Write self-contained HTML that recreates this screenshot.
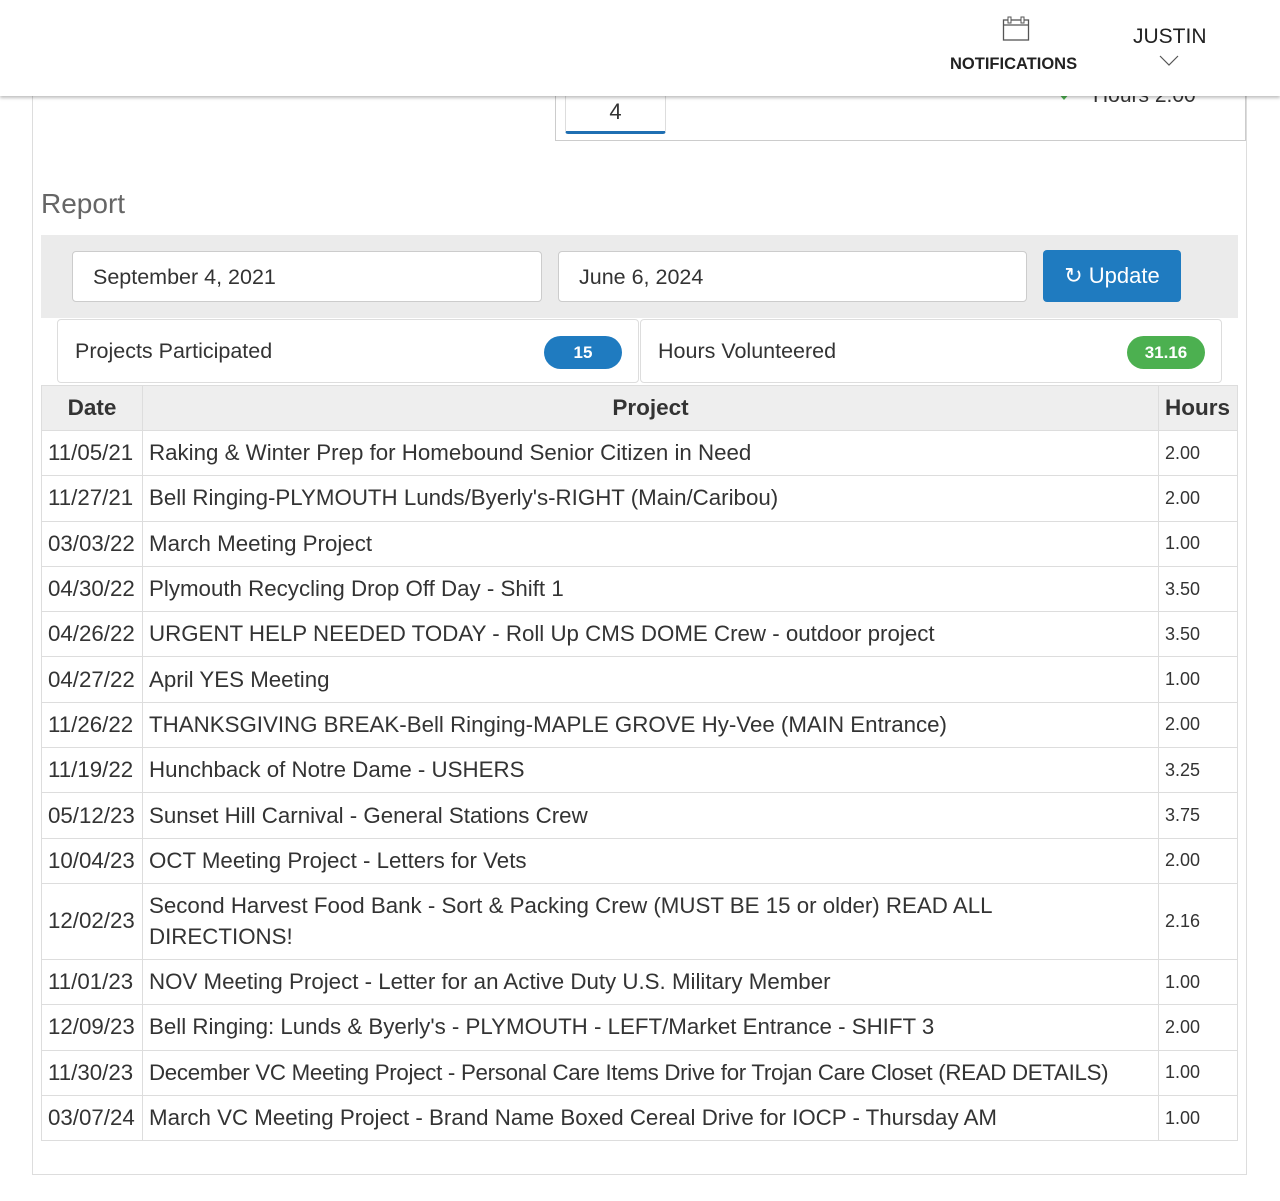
<!DOCTYPE html>
<html><head><style>
body{margin:0;width:1280px;height:1201px;background:#fff;font-family:"Liberation Sans",sans-serif;color:#333;position:relative;overflow:hidden}
.hdr{position:absolute;left:0;top:0;width:1280px;height:96px;background:#fff;box-shadow:0 2px 3px rgba(0,0,0,.25);z-index:5}
.outer{position:absolute;left:32px;top:60px;width:1213px;height:1114px;border:1px solid #ddd;border-top:none}
.card{position:absolute;left:555px;top:60px;width:689px;height:80px;border:1px solid #ccc;border-top:none;background:#fff}
.abs{position:absolute}
.inp{position:absolute;top:251px;height:51px;background:#fff;border:1px solid #ccc;border-radius:4px;font-size:21.5px;line-height:51px;padding-left:20px;box-sizing:border-box}
.panel{position:absolute;top:319px;height:64px;border:1px solid #ddd;border-radius:4px;background:#fff;box-sizing:border-box;font-size:21.5px;line-height:62px;padding-left:17px}
.badge{position:absolute;top:16px;height:33px;border-radius:17px;color:#fff;font-weight:bold;font-size:17px;line-height:33px;text-align:center}
table{position:absolute;left:41px;top:385px;width:1197px;border-collapse:collapse;font-size:22.3px}
td,th{border:1px solid #ddd;padding:0 6px;height:44.3px}
th{background:#eee;font-size:22.5px;height:44px}
td.h{font-size:18px}
td:first-child{white-space:nowrap}
</style></head><body>
<div class="outer"></div>
<div class="card">
<div class="abs" style="left:9px;top:34px;width:99px;height:36px;border:1px solid #ddd;border-bottom:3px solid #1f6fb2;border-radius:3px;text-align:center;font-size:22px;line-height:34px">4</div>
<div class="abs" style="left:502px;top:33px;width:0;height:0;border-left:6px solid transparent;border-right:6px solid transparent;border-top:7px solid #4cb050"></div>
<div class="abs" style="left:537px;top:24px;font-size:21px">Hours 2.00</div>
</div>
<div class="hdr">
<svg class="abs" style="left:1002px;top:16px" width="28" height="26" viewBox="0 0 28 26"><rect x="1.5" y="4" width="25" height="20" fill="none" stroke="#555" stroke-width="1.3"/><line x1="1.5" y1="9" x2="26.5" y2="9" stroke="#555" stroke-width="1.3"/><rect x="6" y="1" width="3" height="6" fill="#fff" stroke="#555"/><rect x="19" y="1" width="3" height="6" fill="#fff" stroke="#555"/></svg>
<div class="abs" style="left:950px;top:55px;font-size:16.5px;font-weight:bold;color:#222">NOTIFICATIONS</div>
<div class="abs" style="left:1133px;top:25px;font-size:21px;color:#222">JUSTIN</div>
<svg class="abs" style="left:1159px;top:55px" width="20" height="12"><polyline points="1,1 10,10 19,1" fill="none" stroke="#555" stroke-width="1.2"/></svg>
</div>
<div class="abs" style="left:41px;top:188px;font-size:28px;color:#666">Report</div>
<div class="abs" style="left:41px;top:235px;width:1197px;height:83px;background:#ebebeb"></div>
<div class="inp" style="left:72px;width:470px">September 4, 2021</div>
<div class="inp" style="left:558px;width:469px">June 6, 2024</div>
<div class="abs" style="left:1043px;top:250px;width:138px;height:52px;background:#1f7bc0;border-radius:4px;color:#fff;font-size:22px;line-height:52px;text-align:center">&#x21bb; Update</div>
<div class="panel" style="left:57px;width:582px">Projects Participated<div class="badge" style="left:486px;width:78px;background:#1f7bc0">15</div></div>
<div class="panel" style="left:640px;width:582px">Hours Volunteered<div class="badge" style="left:486px;width:78px;background:#4cb050">31.16</div></div>
<table>
<tr><th style="width:88px">Date</th><th>Project</th><th style="width:66px;text-align:left">Hours</th></tr>
<tr><td>11/05/21</td><td>Raking &amp; Winter Prep for Homebound Senior Citizen in Need</td><td class="h">2.00</td></tr>
<tr><td>11/27/21</td><td>Bell Ringing-PLYMOUTH Lunds/Byerly's-RIGHT (Main/Caribou)</td><td class="h">2.00</td></tr>
<tr><td>03/03/22</td><td>March Meeting Project</td><td class="h">1.00</td></tr>
<tr><td>04/30/22</td><td>Plymouth Recycling Drop Off Day - Shift 1</td><td class="h">3.50</td></tr>
<tr><td>04/26/22</td><td>URGENT HELP NEEDED TODAY - Roll Up CMS DOME Crew - outdoor project</td><td class="h">3.50</td></tr>
<tr><td>04/27/22</td><td>April YES Meeting</td><td class="h">1.00</td></tr>
<tr><td>11/26/22</td><td>THANKSGIVING BREAK-Bell Ringing-MAPLE GROVE Hy-Vee (MAIN Entrance)</td><td class="h">2.00</td></tr>
<tr><td>11/19/22</td><td>Hunchback of Notre Dame - USHERS</td><td class="h">3.25</td></tr>
<tr><td>05/12/23</td><td>Sunset Hill Carnival - General Stations Crew</td><td class="h">3.75</td></tr>
<tr><td>10/04/23</td><td>OCT Meeting Project - Letters for Vets</td><td class="h">2.00</td></tr>
<tr><td style="height:75px">12/02/23</td><td style="line-height:31px">Second Harvest Food Bank - Sort &amp; Packing Crew (MUST BE 15 or older) READ ALL<br>DIRECTIONS!</td><td class="h">2.16</td></tr>
<tr><td>11/01/23</td><td>NOV Meeting Project - Letter for an Active Duty U.S. Military Member</td><td class="h">1.00</td></tr>
<tr><td>12/09/23</td><td>Bell Ringing: Lunds &amp; Byerly's - PLYMOUTH - LEFT/Market Entrance - SHIFT 3</td><td class="h">2.00</td></tr>
<tr><td>11/30/23</td><td style="white-space:nowrap;letter-spacing:-0.3px">December VC Meeting Project - Personal Care Items Drive for Trojan Care Closet (READ DETAILS)</td><td class="h">1.00</td></tr>
<tr><td>03/07/24</td><td>March VC Meeting Project - Brand Name Boxed Cereal Drive for IOCP - Thursday AM</td><td class="h">1.00</td></tr>
</table>
</body></html>
